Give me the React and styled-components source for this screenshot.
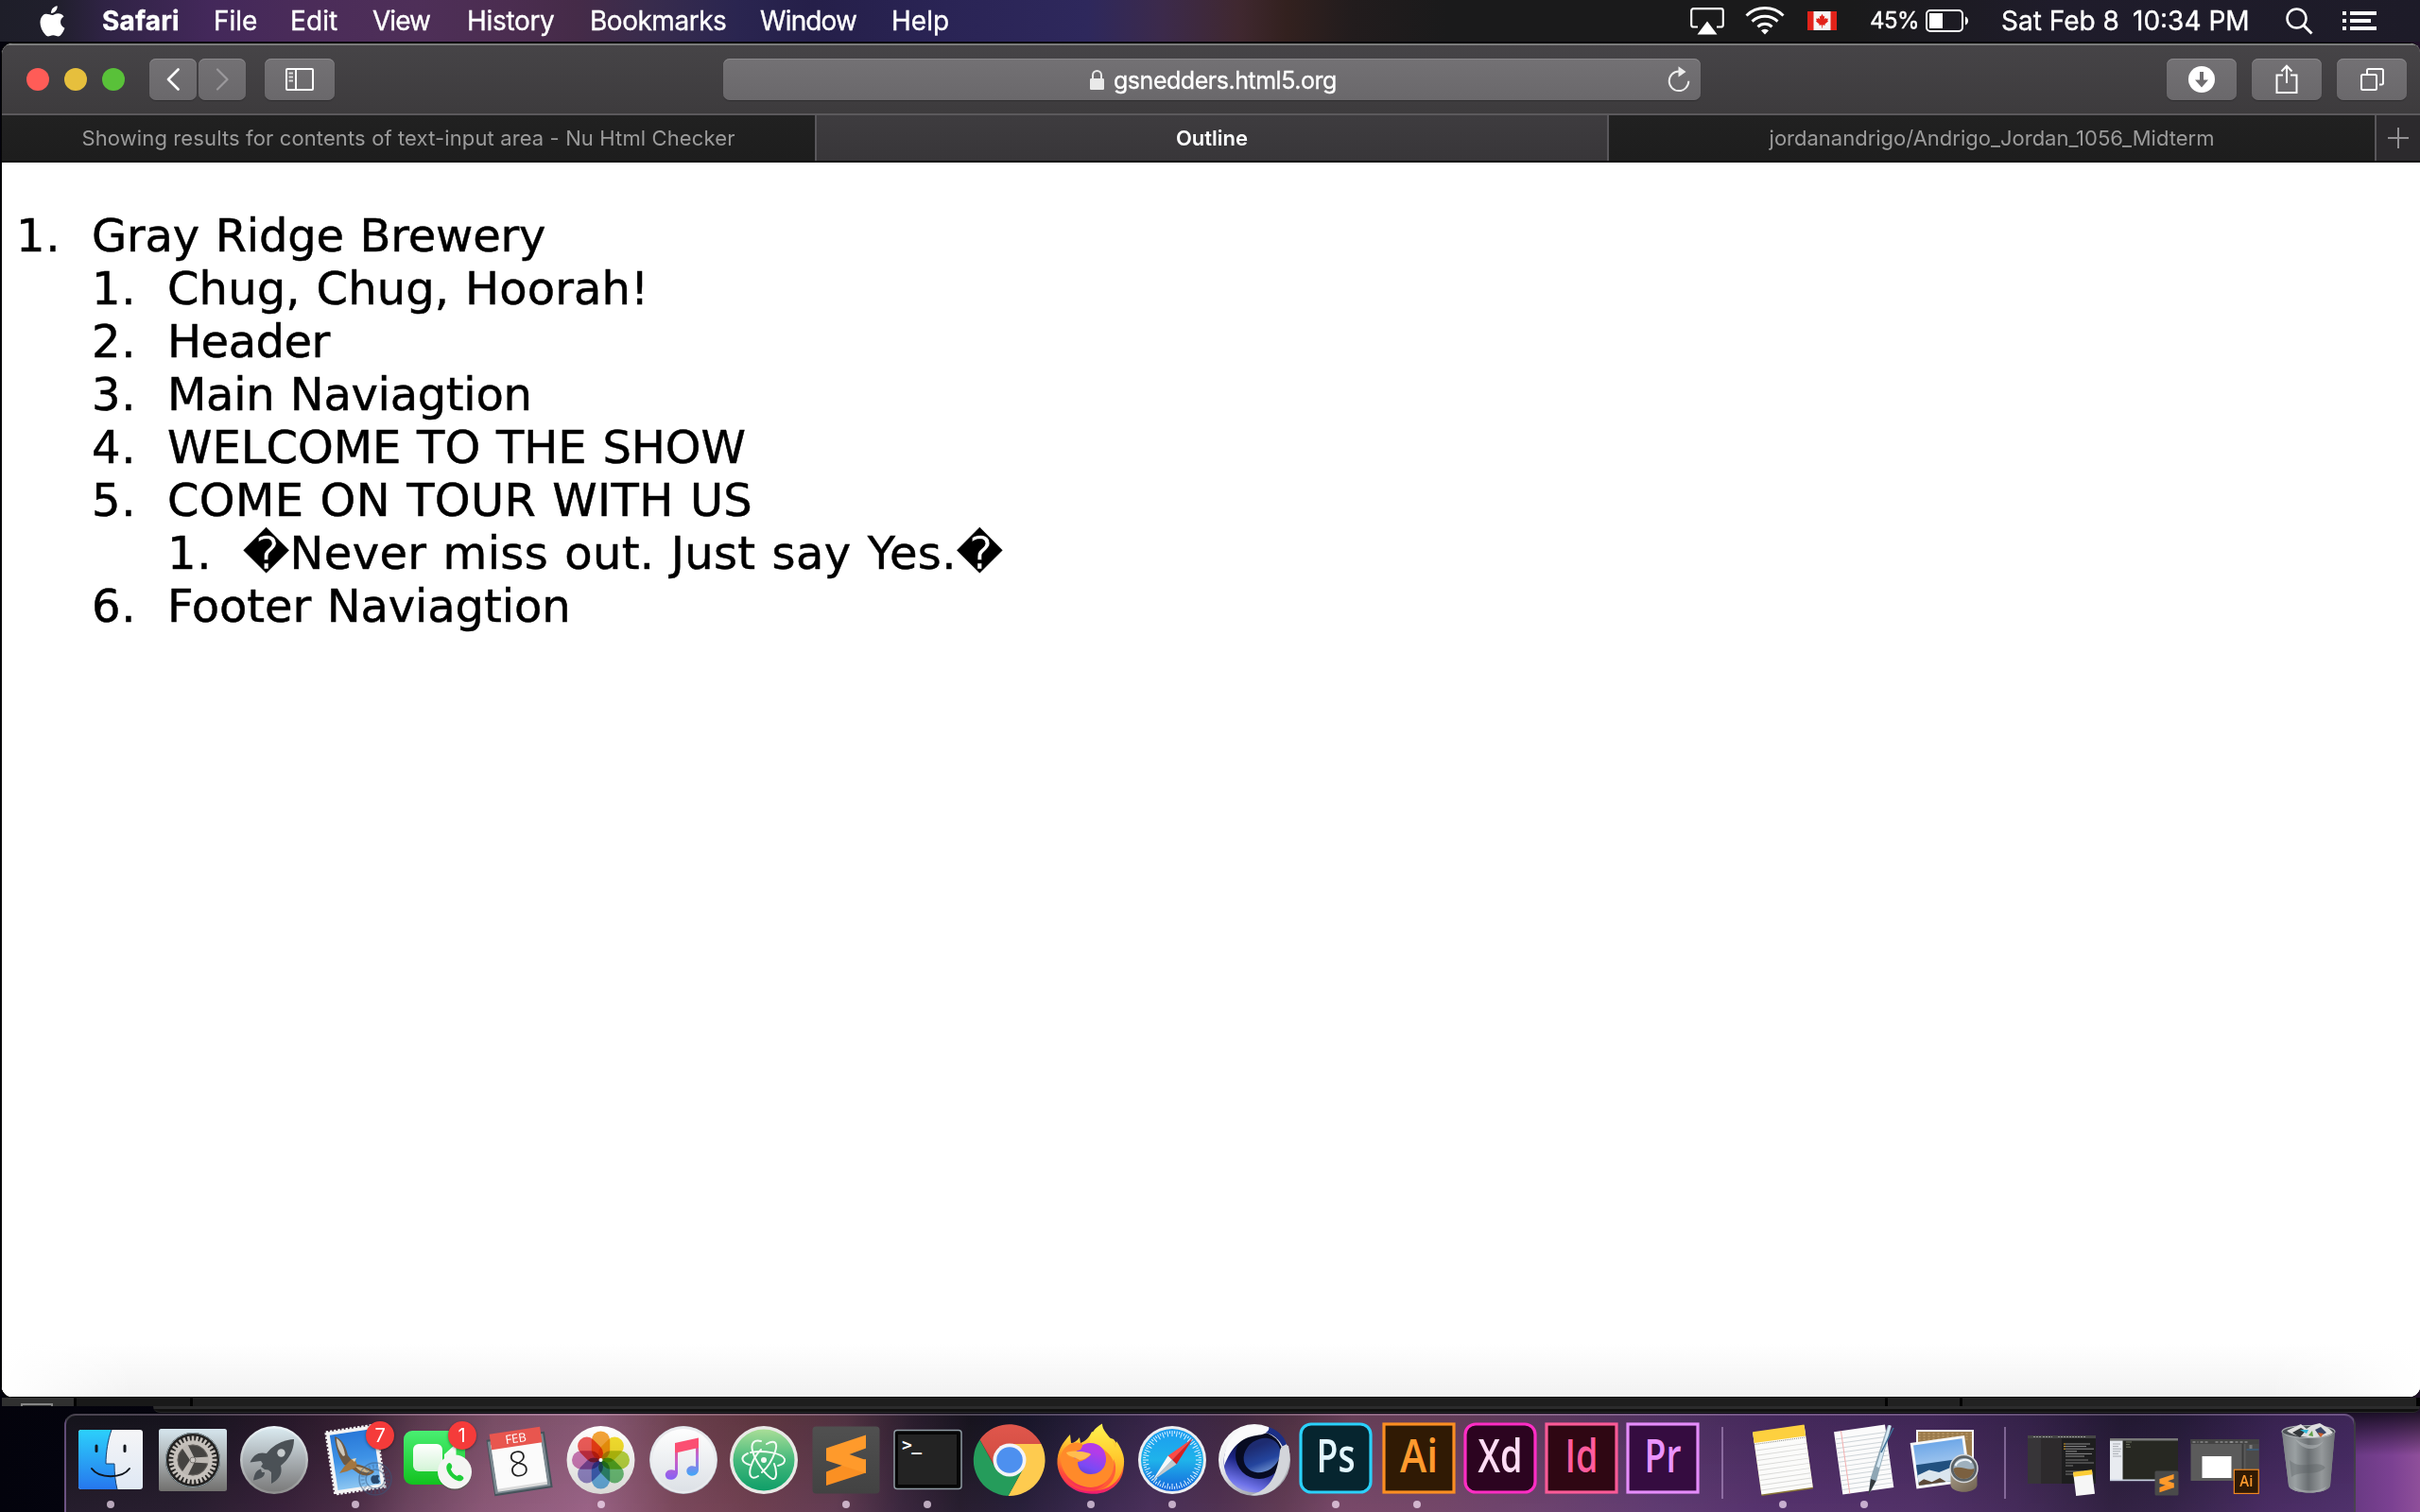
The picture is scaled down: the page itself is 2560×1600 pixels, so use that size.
import React from "react";
import styled, { createGlobalStyle, css } from "styled-components";

const GlobalStyle = createGlobalStyle`
  * { box-sizing: border-box; }
  html, body { margin: 0; padding: 0; background: #04040d; }
  body { width: 2560px; height: 1600px; overflow: hidden; font-family: Inter, "Liberation Sans", sans-serif; }
  svg { display: block; flex: none; }
`;

/* ---------- Desktop ---------- */

const Desktop = styled.div`
  width: 2560px;
  height: 1600px;
  overflow: hidden;
  display: flex;
  flex-direction: column;
  background:
    linear-gradient(180deg, rgba(4, 3, 12, 0.8) 1494px, rgba(4, 3, 12, 0) 1540px),
    linear-gradient(90deg, #03030c 0, #04040f 90px, #0a0813 400px, #08060c 2300px, #6a3a84 2492px, #7b4192 2530px, #8f4f9a 2560px);
`;

/* ---------- Menu bar ---------- */

const MenuBar = styled.header`
  height: 44px;
  flex: none;
  display: flex;
  align-items: center;
  color: #fff;
  font-size: 28px;
  line-height: 44px;
  white-space: pre;
  -webkit-text-stroke: 0.35px #fff;
  background: linear-gradient(
    90deg,
    #1e1e29 0, #201f2c 60px, #2f2344 110px, #43285a 220px, #4b2c59 330px, #4e2f58 440px,
    #4b2d50 540px, #452b48 610px, #382c4d 690px, #2a2550 780px, #251f49 860px, #2a2455 1000px,
    #2e285c 1150px, #3c2a4b 1230px, #402830 1310px, #33211f 1360px, #221c1d 1430px,
    #1a1a1b 1530px, #1a1a1b 1960px, #1f1c2b 2180px, #1d1b28 2560px
  );
`;

const AppleSlot = styled.div`
  width: 108px;
  padding-left: 42px;
`;

const MenuItem = styled.span`
  flex: none;
  width: ${(p) => p.$w}px;
  letter-spacing: ${(p) => p.$ls || 0}px;
  font-weight: ${(p) => (p.$bold ? 700 : 400)};
`;

const StatusArea = styled.div`
  margin-left: auto;
  display: flex;
  align-items: center;
  padding-right: 46px;
`;

const StatusIcon = styled.div`
  margin-left: ${(p) => p.$gap}px;
`;

const BatteryLabel = styled.span`
  margin-left: 35px;
  width: 59px;
  font-size: 24px;
  letter-spacing: -0.5px;
`;

const ClockPart = styled.span`
  width: ${(p) => p.$w}px;
  margin-left: ${(p) => p.$gap || 0}px;
`;

/* ---------- Browser window ---------- */

const BrowserWindow = styled.main`
  margin: 1px 0 0 1px;
  height: 1434px;
  flex: none;
  display: flex;
  flex-direction: column;
  border: 1px solid #050505;
  border-right: 0;
  border-radius: 12px 10px 12px 12px;
  overflow: hidden;
  background: #fff;
`;

const Toolbar = styled.div`
  height: 76px;
  flex: none;
  display: flex;
  align-items: center;
  padding: 0 14px 0 26px;
  border-top: 2px solid #7b7c7c;
  border-bottom: 2px solid #5b595c;
  background: linear-gradient(#464447, #3d3b3d);
`;

const TrafficLights = styled.div`
  display: flex;
  gap: 16px;
  margin-right: 26px;
`;

const Light = styled.span`
  width: 24px;
  height: 24px;
  border-radius: 50%;
  background: ${(p) => p.$color};
`;

const controlFace = css`
  height: 44px;
  border-radius: 7px;
  background: linear-gradient(#737174, #6a686b);
  box-shadow: inset 0 1px 0 #8a888b, 0 1px 1px rgba(0, 0, 0, 0.25);
`;

const ToolButton = styled.button`
  ${controlFace}
  width: ${(p) => p.$w}px;
  margin-left: ${(p) => p.$gap || 0}px;
  padding: 0;
  border: 0;
  flex: none;
  display: flex;
  align-items: center;
  justify-content: center;
`;

const AddressBar = styled.div`
  ${controlFace}
  margin-left: 411px;
  width: 1034px;
  display: flex;
  align-items: center;
  padding: 0 11px 0 388px;
`;

const Address = styled.span`
  margin-left: 10px;
  padding-top: 2px;
  flex: 1;
  color: #fff;
  font-size: 25px;
  letter-spacing: -0.47px;
  -webkit-text-stroke: 0.3px #fff;
`;

const ActionButtons = styled.div`
  margin-left: auto;
  display: flex;
  gap: 16px;
`;

const TabStrip = styled.div`
  height: 50px;
  flex: none;
  display: flex;
  border-bottom: 2px solid #0a0a0a;
  background: #1f1f1f;
`;

const Tab = styled.div`
  width: ${(p) => p.$w}px;
  height: 48px;
  line-height: 48px;
  text-align: center;
  font-size: 22px;
  white-space: nowrap;
  letter-spacing: ${(p) => p.$ls || 0}px;
  border-right: 2px solid #59575b;
  color: ${(p) => (p.$active ? "#fff" : "#9b9b9b")};
  font-weight: ${(p) => (p.$active ? 600 : 400)};
  background: ${(p) => (p.$active ? "linear-gradient(#3e3c3f, #383639)" : "linear-gradient(#212121, #1d1d1d)")};
`;

const NewTab = styled.div`
  flex: 1;
  display: flex;
  align-items: center;
  justify-content: center;
  background: #2c2a2d;
`;

const Page = styled.section`
  flex: 1;
  padding: 49px 0 0 15px;
  color: #000;
  font-family: "DejaVu Sans", sans-serif;
  -webkit-text-stroke: 0.5px #000;
  background:
    linear-gradient(90deg, #fff, rgba(255, 255, 255, 0) 140px, rgba(255, 255, 255, 0) calc(100% - 160px), #fff) 0 100% / 100% 60px no-repeat,
    linear-gradient(#fff, #f2f2f2) 0 100% / 100% 56px no-repeat,
    #fff;
`;

const OutlineList = styled.ol`
  margin: 0;
  padding: 0 0 0 ${(p) => (p.$nested ? 80 : 0)}px;
  list-style: none;
`;

const OutlineRow = styled.div`
  height: 56px;
  display: flex;
  align-items: center;
  font-size: 48px;
  line-height: 56px;
  white-space: nowrap;
`;

const Marker = styled.span`
  width: 80px;
  letter-spacing: 0.6px;
`;

const OutlineText = styled.span`
  letter-spacing: ${(p) => p.$ls}px;
  word-spacing: 1.6px;
`;

/* ---------- Windows peeking out behind ---------- */

const BackWindows = styled.div`
  height: 17px;
  flex: none;
  padding-left: 2px;
  display: flex;
  flex-direction: column;
  align-items: flex-end;
`;

const BackRow = styled.div`
  width: 100%;
  height: 9px;
  display: flex;
  background: #030303;
`;

const BackPane = styled.div`
  height: 9px;
  width: ${(p) => p.$w}px;
  margin-right: 3px;
  padding: 6px 0 0 20px;
  background: ${(p) => p.$c};
`;

const BackThumb = styled.div`
  width: 34px;
  height: 3px;
  border: 2px solid #858585;
  border-bottom: 0;
`;

const BackEdge = styled.div`
  width: 2398px;
  height: 7px;
  border-top: 3px solid #2b2b2c;
  border-bottom: 1px solid #2a2a2b;
  border-radius: 0 0 14px 14px;
  background: #101010;
`;

/* ---------- Dock ---------- */

const DockShelf = styled.nav`
  margin-left: 68px;
  width: 2424px;
  height: 105px;
  flex: none;
  display: flex;
  padding: 4px 0 0 4px;
  border: 2px solid rgba(255, 255, 255, 0.17);
  border-bottom: 0;
  border-radius: 12px 12px 0 0;
  background:
    linear-gradient(180deg, rgba(20, 10, 20, 0.12), rgba(190, 110, 190, 0.1)),
    linear-gradient(
      97deg,
      #14141c 0, #17151f 130px, #2a1a2c 240px, #3c2437 310px, #634055 370px, #85566f 450px,
      #966280 560px, #744552 650px, #673b45 730px, #583747 820px, #2c1f30 890px, #17151f 950px,
      #18172b 1010px, #2b2141 1080px, #3d294f 1150px, #442b46 1220px, #58374a 1290px, #714560 1350px,
      #6c4360 1450px, #643e66 1560px, #56366a 1680px, #4a2c64 1800px, #452a5e 1960px, #38244f 2060px,
      #231a35 2160px, #261c3b 2220px, #3c2558 2320px, #452b64 2424px
    );
`;

const DockItem = styled.div`
  position: relative;
  width: 86.4px;
  flex: none;
  display: flex;
  flex-direction: column;
  align-items: center;
`;

const Running = styled.span`
  width: 8px;
  height: 8px;
  border-radius: 50%;
  background: rgba(255, 235, 255, 0.68);
`;

const DockDivider = styled.div`
  width: 2px;
  height: 76px;
  margin: 8px ${(p) => p.$m}px 0;
  background: rgba(210, 180, 230, 0.45);
`;

const Badge = styled.span`
  position: absolute;
  top: 2px;
  left: 54px;
  width: 30px;
  height: 30px;
  border-radius: 50%;
  background: #f53b3a;
  box-shadow: 0 1px 3px rgba(0, 0, 0, 0.4);
  color: #fff;
  font-size: 20px;
  line-height: 30px;
  text-align: center;
`;

/* ---------- Menu bar icons ---------- */

const AppleLogo = () => (
  <svg width="27" height="33" viewBox="0 0 27 33" fill="#fff">
    <path d="M18.6 0.2c0.3 2-0.6 4-1.7 5.400c-1.200 1.500-3 2.500-4.800 2.400c-0.300-1.900 0.600-3.900 1.700-5.200C15 1.400 17 0.400 18.600 0.200z" />
    <path d="M13.600 9.900c1.300 0 3.200-1.700 5.900-1.700c2.300 0 4.600 1.200 6 3.200c-5.200 3-4.300 10.300 1 12.300c-0.900 2.500-2.300 5-4 7.100c-1.500 1.900-3.100 1.900-5 1.100c-2.200-1-4.300-1-6.500 0c-2 0.800-3.400 0.700-5-1.100C0.100 24.700-1.400 14.900 3.200 10.400C6.800 7 10.200 9.900 13.600 9.900z" />
  </svg>
);

const AirPlay = () => (
  <svg width="36" height="29" viewBox="0 0 36 29">
    <path d="M8 20.500H3.500a2.300 2.300 0 0 1-2.300-2.300V3.400a2.300 2.300 0 0 1 2.300-2.300h29a2.300 2.300 0 0 1 2.300 2.300v14.800a2.300 2.300 0 0 1-2.300 2.300H28" fill="none" stroke="#fff" strokeWidth="2.100" />
    <path d="M18 14.500L28.500 28.500H7.500z" fill="#fff" />
  </svg>
);

const Wifi = () => (
  <svg width="42" height="30" viewBox="0 0 42 30" fill="none" stroke="#fff" strokeWidth="3">
    <path d="M1.500 9.500a28 28 0 0 1 39 0" />
    <path d="M7.500 15.600a19.500 19.500 0 0 1 27 0" />
    <path d="M13.500 21.300a11 11 0 0 1 15 0" />
    <path d="M21 29.500l-4-4.200a5.800 5.800 0 0 1 8 0z" fill="#fff" stroke="none" />
  </svg>
);

const Flag = () => (
  <svg width="31" height="20" viewBox="0 0 31 20">
    <rect width="31" height="20" fill="#f5f5f5" />
    <rect width="6.500" height="20" fill="#e2231a" />
    <rect x="24.500" width="6.500" height="20" fill="#e2231a" />
    <path d="M15.500 2.800l1.500 2.600 1.300-.6-.6 3.600 1.800-1.700.5 1.200 2-.3-.8 2.300.9.700-3.700 3 .4 1.200-2.900-.4v3h-.8v-3l-2.900.4.400-1.200-3.700-3 .9-.7-.8-2.300 2 .3.500-1.200 1.800 1.700-.6-3.600 1.300.6z" fill="#e2231a" />
  </svg>
);

const Battery = () => (
  <svg width="46" height="24" viewBox="0 0 46 24">
    <rect x="1" y="1" width="38" height="22" rx="4" fill="none" stroke="#fff" strokeWidth="2" />
    <rect x="4" y="4" width="14" height="16" fill="#fff" />
    <path d="M42 7.500c4 1.200 4 7.800 0 9z" fill="#fff" />
  </svg>
);

const Search = () => (
  <svg width="29" height="29" viewBox="0 0 29 29" fill="none" stroke="#fff" strokeWidth="2.500">
    <circle cx="11.500" cy="11.500" r="10" />
    <path d="M18.500 18.500l9 9" strokeWidth="3" />
  </svg>
);

const NotificationList = () => (
  <svg width="36" height="20" viewBox="0 0 36 20" fill="#fff">
    <rect width="4" height="4" /><rect x="8" width="28" height="4" />
    <rect y="8" width="4" height="4" /><rect x="8" y="8" width="22" height="4" />
    <rect y="16" width="4" height="4" /><rect x="8" y="16" width="28" height="4" />
  </svg>
);

/* ---------- Toolbar icons ---------- */

const Chevron = ({ forward }) => (
  <svg width="14" height="24" viewBox="0 0 14 24" fill="none" strokeLinecap="round" strokeLinejoin="round"
    stroke={forward ? "#9b999c" : "#fff"} strokeWidth={forward ? 2.2 : 2.6}>
    <path d={forward ? "M2 1.500L12.500 12L2 22.500" : "M12.500 1.500L2 12L12.500 22.500"} />
  </svg>
);

const SidebarIcon = () => (
  <svg width="30" height="24" viewBox="0 0 30 24">
    <rect x="1" y="1" width="28" height="22" rx="1" fill="none" stroke="#fff" strokeWidth="2" />
    <path d="M11 1v22" stroke="#fff" strokeWidth="2" />
    <path d="M3.500 5.500h4.500M3.500 9.500h4.500M3.500 13.500h4.500" stroke="#dcdbdc" strokeWidth="2" />
  </svg>
);

const Lock = () => (
  <svg width="15" height="21" viewBox="0 0 15 21">
    <rect y="9" width="15" height="12" rx="1.200" fill="#e9e9e9" />
    <path d="M3 10V5.500a4.500 4.500 0 0 1 9 0V10" fill="none" stroke="#e9e9e9" strokeWidth="2" />
  </svg>
);

const Reload = () => (
  <svg width="24" height="28" viewBox="0 0 24 28">
    <path d="M12 5.500a10.300 10.300 0 1 0 10.300 10.300" fill="none" stroke="#ededed" strokeWidth="2" />
    <path d="M11.500 0.200L19.500 6L11.500 11.500z" fill="#ededed" />
  </svg>
);

const Download = () => (
  <svg width="28" height="28" viewBox="0 0 28 28">
    <circle cx="14" cy="14" r="14" fill="#fff" />
    <path d="M12 6h4v8.500h5L14 22.500 7 14.500h5z" fill="#6e6c6f" />
  </svg>
);

const Share = () => (
  <svg width="24" height="32" viewBox="0 0 24 32" fill="none" stroke="#fff" strokeWidth="2">
    <path d="M8 11.500H1.500V30h21V11.500H16M12 20V2M6.500 7.500L12 1.800l5.500 5.700" />
  </svg>
);

const TabsIcon = () => (
  <svg width="26" height="26" viewBox="0 0 26 26" fill="none" stroke="#fff" strokeWidth="2">
    <rect x="2" y="8" width="16" height="16" rx="1.500" />
    <path d="M8 8V3.500a1.500 1.500 0 0 1 1.500-1.500H23.500a1.500 1.500 0 0 1 1.500 1.500V17a1.500 1.500 0 0 1-1.500 1.500H21" />
  </svg>
);

const Plus = () => (
  <svg width="22" height="22" viewBox="0 0 22 22" stroke="#939194" strokeWidth="2">
    <path d="M0 11h22M11 0v22" />
  </svg>
);

/* ---------- Dock icons, drawn around a 0,0 centre ---------- */

const Icon = ({ children, dx = 0 }) => (
  <svg width="86" height="86" viewBox="-43 -43 86 86"><g transform={`translate(${dx} 0)`}>{children}</g></svg>
);

const Grad = ({ id, stops, x2 = 0, y2 = 1 }) => (
  <linearGradient id={id} x1="0" y1="0" x2={x2} y2={y2}>
    {stops.map((c, i) => <stop key={i} offset={i / (stops.length - 1)} stopColor={c} />)}
  </linearGradient>
);

const Finder = () => (
  <Icon>
    <Grad id="fA" stops={["#2cd0fb", "#2677ee"]} />
    <Grad id="fB" stops={["#f5f5f7", "#dfe8f4"]} />
    <rect x="-34" y="-32" width="68" height="63" rx="3" fill="url(#fB)" />
    <path d="M-31-32H1C-3-21-5-8-5 4H4C4 14 5 23 7 31H-31a3 3 0 0 1-3-3V-29a3 3 0 0 1 3-3z" fill="url(#fA)" />
    <path d="M1-32C-3-21-5-8-5 4H4C4 14 5 23 7 31" fill="none" stroke="#17406f" strokeWidth="1" />
    <path d="M-15-15v5.500M15-15v5.500" stroke="#10151c" strokeWidth="3" strokeLinecap="round" />
    <path d="M-20 9C-12 20 12 20 20 9" fill="none" stroke="#10151c" strokeWidth="2" strokeLinecap="round" />
  </Icon>
);

const Settings = () => (
  <Icon>
    <Grad id="sA" stops={["#d6e6ee", "#a9aeb0", "#71706e"]} />
    <rect x="-36" y="-33" width="72" height="66" rx="2.500" fill="url(#sA)" />
    <circle r="29" fill="#242322" /><circle r="28.500" fill="none" stroke="#8fa0a8" strokeWidth="1" />
    {Array.from({ length: 32 }, (_, i) => (
      <rect key={i} x="-1.300" y="-25.500" width="2.600" height="6" fill="#c5c0bb" transform={`rotate(${i * 11.25})`} />
    ))}
    <circle r="18.500" fill="#454341" stroke="#c5c0bb" strokeWidth="4.500" />
    <circle r="16" fill="none" stroke="#6b6763" strokeWidth="1" />
    {[0, 120, 240].map((a) => <path key={a} d="M0-2.500L17-3.500V3.500L0 2.500z" fill="#bdb8b3" transform={`rotate(${a})`} />)}
    <circle r="3" fill="#ccc8c4" stroke="#77736f" />
  </Icon>
);

const Launchpad = () => (
  <Icon>
    <Grad id="lA" stops={["#d9e9ef", "#a9afb3", "#7b7b7b"]} />
    <Grad id="lB" stops={["#eef7fb", "#8e8e8e"]} />
    <circle r="36" fill="url(#lB)" /><circle r="33.500" fill="url(#lA)" />
    <path d="M21-22C10-21.500-1-16-8-7C-16-9-22-6-25.500 2.500L-14 1L-12 4L-14 7L-10 10L-6 10.500L-3 13L-3 25C6 20 9 14 7 6C16-1 21-11 21-22z" fill="#4b5156" />
    <path d="M-14 9.500C-20 11-21 16-22 21.500C-15 20-10 18.500-10 13L-13 13z" fill="#4b5156" />
    <circle cx="7.500" cy="-7.500" r="4.200" fill="#c7ccce" />
  </Icon>
);

const Mail = () => (
  <Icon>
    <Grad id="mA" stops={["#2878d8", "#3f93e6", "#8cc6f2"]} />
    <g transform="rotate(-8.500)">
      <rect x="-26.500" y="-33.500" width="53" height="66" fill="#f4f4f4" stroke="#f4f4f4" strokeWidth="3" strokeDasharray="2.500 1.700" />
      <rect x="-23" y="-30" width="46" height="59" fill="url(#mA)" />
    </g>
    <path d="M-22-25C-15-23-10-15-8-5L-4 0C-5 5-9 7-12 5C-17-2-21-12-22-25z" fill="#6d5a45" />
    <path d="M-20-23C-15-20-12-13-11-5L-13-4C-17-9-20-15-20-23z" fill="#cfc8ba" />
    <path d="M-2 4C4 4 13 8 20 12C17 17 9 18 3 14L-4 9z" fill="#7a5a38" />
    <path d="M0 7C6 7 12 9 17 13C11 14 5 13 0 7z" fill="#cdb48a" />
    <path d="M-4-1C1 0 3 4 0 8L-9 12L-17 14L-12 7z" fill="#a4763f" />
    <path d="M-4-1l5-1-2 4z" fill="#e8d9b8" />
    <g fill="none" stroke="#36587e" strokeOpacity=".5">
      <circle cx="21" cy="20" r="17" strokeWidth="1.500" /><circle cx="21" cy="20" r="10" strokeWidth="1.500" />
      <circle cx="21" cy="20" r="13.500" strokeWidth="4" strokeDasharray="2 2" strokeOpacity=".35" />
    </g>
    <path d="M21 16.500c2-1.500 4-.6 4.500.8c-2 1.500-1.500 4 .5 5c-1 2.800-2.500 3.200-4.500 2.400c-2 .8-4 .4-5-3c-.8-4 1.500-6.500 4.500-5.200z" fill="#28496e" />
  </Icon>
);

const FaceTime = () => (
  <Icon>
    <Grad id="ftA" stops={["#49ef72", "#12c21f"]} /><Grad id="ftB" stops={["#ffffff", "#d3f4d6"]} />
    <rect x="-36" y="-31" width="65" height="57" rx="9" fill="url(#ftA)" />
    <rect x="-26" y="-17" width="31" height="29" rx="6" fill="url(#ftB)" />
    <path d="M7-6L17-15c1.500-1 2.500-.5 2.500 1V10L7 1z" fill="url(#ftB)" />
    <circle cx="18" cy="14" r="18" fill="#0a6a1e" opacity=".25" />
    <circle cx="18" cy="12.500" r="18" fill="#f4f5f3" />
    <path d="M9.500 6C11 2.500 13 2 14.500 4.500C16 7 15 8.500 13.800 9.800C15.500 13.500 17.500 15.500 20.500 17C22 15.500 23.500 15 26 17C28.500 19 27.500 20.500 25 22C19 24 7.500 13.500 9.500 6z" fill="#1fce39" />
  </Icon>
);

const Calendar = () => (
  <Icon>
    <g transform="rotate(-8.500)">
      <path d="M-31-26H31V34H-31z" fill="#46535b" />
      <path d="M-30-24H29V32H-30z" fill="#7d8a92" />
      <path d="M-27-20H26V30H-27z" fill="#dcdcdc" /><path d="M-27-20H26V27H-27z" fill="#fbfbfb" />
      <path d="M-27-31.500H27V-15H-27z" fill="#e8564f" />
      <text x="0" y="-18.500" textAnchor="middle" fontFamily="Open Sans" fontSize="13" fill="#fff">FEB</text>
      <text x="-1" y="17" textAnchor="middle" fontFamily="Open Sans" fontWeight="300" fontSize="37" fill="#222">8</text>
    </g>
  </Icon>
);

const petals = ["#f6a02d", "#f4dd22", "#b5d336", "#66bf73", "#62aee6", "#8f83c8", "#cb74b4", "#ef5350"];
const Petal = styled.rect`
  mix-blend-mode: multiply;
`;
const Photos = () => (
  <Icon dx={-0.5}>
    <Grad id="phA" stops={["#ffffff", "#d9d9d6"]} />
    <circle r="36" fill="url(#phA)" />
    {petals.map((c, i) => (
      <Petal key={c} x="-9.700" y="-30.500" width="19.400" height="30" rx="9.700" fill={c} fillOpacity=".95"
        transform={`rotate(${i * 45})`} />
    ))}
    <circle r="2" fill="#fff" />
  </Icon>
);

const Music = () => (
  <Icon dx={1}>
    <Grad id="muA" stops={["#fefefe", "#dde1e6"]} />
    <Grad id="muB" stops={["#fb4e6e", "#c860c8", "#8561f5"]} />
    <Grad id="muC" stops={["#fb4e6e", "#b56add", "#3ea8f8"]} />
    <circle r="36" fill="#b5bcc6" /><circle r="35.500" cy="-.3" fill="#e9ebee" /><circle r="33" fill="url(#muA)" />
    <path d="M-9-17.500V11C-16 8.500-20 13-19 17C-17.500 23-7 22-6 14V-8L-6-18z" fill="url(#muB)" />
    <path d="M13-22V7C6 4.500 2.500 9 3.500 13C5 19 16 17.500 16 10V-23z" fill="url(#muC)" />
    <path d="M-9-18L16-23.500V-13L-6-8H-9z" fill="#fb4f72" />
  </Icon>
);

const Atom = () => (
  <Icon>
    <Grad id="atA" stops={["#a9de97", "#45b97c", "#0f9e68"]} />
    <circle r="36" fill="#e9e9e6" /><circle r="32.500" fill="url(#atA)" />
    <g fill="none" stroke="#f2fbf3" strokeWidth="2" strokeLinecap="round">
      <path d="M-17-7C-26-3-23 3-15 5M-14-8C0-11 20-7 22-1C23 3 19 5 15 6" />
      <path d="M-3-20C-10-22-14-18-12-10C-9 2 2 16 9 20C14 21 14 12 11 4" />
      <path d="M3-17C12-22 15-18 12-9C9 0 4 8-2 13M-6 17C-14 22-16 15-14 8C-12 1-8-6-3-11" />
    </g>
    <circle r="3" fill="#f2fbf3" />
  </Icon>
);

const SublimeMark = () => (
  <>
    <path d="M-21 12.500V27L21 13.500V-1L0 4z" fill="#fa9023" />
    <path d="M21-26.500L-21-12.500V.5L21 14V0L3.500-6L21-12.500z" fill="#ff9a2b" />
  </>
);

const Sublime = () => (
  <Icon>
    <Grad id="suA" stops={["#505050", "#424242"]} />
    <rect x="-35.500" y="-35.500" width="71" height="71" rx="4" fill="url(#suA)" />
    <SublimeMark />
  </Icon>
);

const Terminal = () => (
  <Icon>
    <rect x="-35" y="-31.500" width="71" height="62" rx="3" fill="#060606" stroke="#8f9ba3" strokeWidth="1.500" />
    <rect x="-31" y="-27" width="62" height="53" fill="#232323" />
    <text x="-27" y="-10" fontFamily="DejaVu Sans Mono" fontWeight="700" fontSize="18" textLength="21" fill="#fff">&gt;_</text>
  </Icon>
);

const Chrome = () => (
  <Icon dx={1}>
    <Grad id="chR" stops={["#e0574c", "#cf4a40"]} />
    <path d="M-31.500-21.500A38 38 0 0 1 33.500-17H0L-15 8.500z" fill="url(#chR)" />
    <path d="M33.500-17A38 38 0 0 1-1.500 38L14.700 8.500L0-17z" fill="#fecb4f" />
    <path d="M-1.500 38A38 38 0 0 1-31.500-21.500L-15 8.500L14.700 8.500z" fill="#259c5b" />
    <path d="M-31.500-21.500L-15 8.500L-17 2z" fill="#8c2d27" opacity=".35" />
    <circle r="17.500" fill="#f4f4f6" /><circle r="13.800" fill="#4d90ef" />
  </Icon>
);

const Firefox = () => (
  <Icon>
    <Grad id="ffA" stops={["#ffe645", "#ff9f22", "#ff4a3c", "#ea0f7f"]} x2={-0.1} />
    <Grad id="ffB" stops={["#fff44f", "#ffcb2f", "#ff8a1c"]} />
    <Grad id="ffC" stops={["#b43be8", "#7a4af5", "#4b38b8"]} x2={-0.4} />
    <path d="M-22-27L-21-18C-18-18-15-20-12-24L-11-18C-3-21 0-28 1-30L24-22C36-8 38 10 30 22C22 34 8 37-2 35.500C-22 34-34 20-35.500 4C-36-10-30-18-22-27z" fill="url(#ffA)" />
    <path d="M-1-18C-1-28 4-34 12-38.500C12-32 17-28 22-21L26-13C27-16 27-18 27-20C34-10 37 0 34 8C30 24 18 32 4 32C20 26 24 10 20-2C18-12 8-16-1-18z" fill="url(#ffB)" />
    <circle cx="-.5" cy="-1" r="17" fill="url(#ffC)" />
    <path d="M-26-8C-20-10-14-9-11-11C-8-15-8-18-12-18C-20-20-30-14-32-4C-33 12-20 28 0 29C14 29 26 18 24 2C22-4 18-8 14-10C20 4 12 15 0 15C-9 15-14 9-14 2C-8 1-3-2 0-6C-5-8-10-6-15-2C-21-1-25-3-26-8z" fill="#ff8a2a" />
    <path d="M-33 6C-28 26-8 33 6 28C18 25 26 14 24-1C30 12 24 31 2 33C-18 34-32 22-33 6z" fill="#ff473f" opacity=".75" />
    <path d="M-26-8C-20-10-14-9-10-9C-6-8-2-8 0-6C-3-3-8 0-12 0C-15-3-24-3-26-8z" fill="#ffbd4f" />
  </Icon>
);

const SafariIcon = () => (
  <Icon>
    <Grad id="saA" stops={["#1b9cf0", "#1fb3ea", "#1566dc"]} />
    <circle r="36" fill="#eceef0" /><circle r="33" fill="url(#saA)" />
    {Array.from({ length: 72 }, (_, i) => (
      <path key={i} d={`M0-31V${i % 2 ? -28 : -25}`} stroke="#dff1ff" strokeWidth="1" transform={`rotate(${i * 5})`} />
    ))}
    <path d="M22-23L-4.500-4.500L0 0z" fill="#ff4a45" /><path d="M22-23L4.500 4.500L0 0z" fill="#d8201f" />
    <path d="M-21 22L-4.500-4.500L0 0z" fill="#f7f7f7" /><path d="M-21 22L4.500 4.500L0 0z" fill="#c4c8cc" />
  </Icon>
);

const Cinema4D = () => (
  <Icon>
    <Grad id="ciA" stops={["#ffffff", "#e9eaee", "#a3a6ad"]} x2={0.5} />
    <Grad id="ciB" stops={["#0a0e2c", "#1a2382", "#6e72e8", "#dcdcf2"]} x2={-0.35} />
    <Grad id="ciC" stops={["#1d2b70", "#24459e", "#8fb2e4"]} x2={-0.3} />
    <circle r="38" fill="url(#ciA)" />
    <circle cx="0" cy="2" r="32.500" fill="url(#ciB)" />
    <circle cx="5" cy="-5" r="25" fill="#070b22" />
    <ellipse cx="8" cy="-5" rx="20.500" ry="17" fill="url(#ciC)" transform="rotate(-35 8 -5)" />
    <path d="M-32 6C-34-16-20-34-2-36L15-35C16-28 9-27 2-26C-14-24-24-14-32 6z" fill="#fafafc" />
    <path d="M15-35C24-32 31-26 34-17L30-14C26-22 20-27 12-29C15-31 16-33 15-35z" fill="#1c2f86" />
    <path d="M36-15C40 2 34 20 21 31C14 36 4 38-4 37C14 32 24 20 27-10C28-15 32-17 36-15z" fill="#d3d5da" />
  </Icon>
);

const adobe = {
  Ps: { line: "#2ad1fb", fill: "#06252f", text: "#e3f7ff", round: true, w: 41 },
  Ai: { line: "#fb8e22", fill: "#301a04", text: "#ff9a2e", w: 40, dx: 2 },
  Xd: { line: "#ff2dc4", fill: "#2c0420", text: "#ffdcf5", round: true, w: 47, dx: 1 },
  Id: { line: "#fb5a97", fill: "#2f0713", text: "#ff5c9d", w: 35, dx: 1 },
  Pr: { line: "#e58cfb", fill: "#350c40", text: "#ea94ff", w: 39 },
};

const AdobeTile = ({ name }) => {
  const { line, fill, text, round, w } = adobe[name];
  return (
    <>
      <rect x="-37" y="-38" width="74" height="72" rx={round ? 11 : 0} fill={fill} stroke={line} strokeWidth="3.200" />
      <text x={-w / 2} y="13" fontFamily="Open Sans" fontWeight="600" fontSize="48" textLength={w} lengthAdjust="spacingAndGlyphs" fill={text}>{name}</text>
    </>
  );
};

const Adobe = ({ name }) => <Icon dx={adobe[name].dx}><AdobeTile name={name} /></Icon>;

const Notes = () => (
  <Icon>
    <g transform="rotate(-8)">
      <rect x="-27.500" y="-33" width="55" height="67.500" fill="#8a7636" />
      <rect x="-27.500" y="-33" width="55" height="66" fill="#fbfbfa" />
      <rect x="-27.500" y="-34" width="55" height="12" fill="#fdd03f" />
      <path d="M-27-20.500H27" stroke="#8b8b80" strokeDasharray="1 1" />
      {Array.from({ length: 9 }, (_, i) => <path key={i} d={`M-27 ${-14 + i * 5.3}H27`} stroke="#d9d9d7" />)}
    </g>
  </Icon>
);

const TextEdit = () => (
  <Icon>
    <g transform="rotate(-8)">
      <rect x="-27.500" y="-34" width="54.500" height="67" fill="#fbfbfb" />
      {Array.from({ length: 12 }, (_, i) => <path key={i} d={`M-27 ${-26 + i * 4.9}H27`} stroke="#ced4d8" />)}
      <path d="M-20-34V33" stroke="#f3b0b0" />
    </g>
    <path d="M25-37L29-36L13 22L5 36L6.500 20z" fill="#8fa6b4" />
    <path d="M26-37L28.500-36.500L16 8L13 7z" fill="#d7e9f4" />
    <path d="M7 20L12.500 22L4.500 37z" fill="#34393d" />
    <path d="M31-34L18-8" stroke="#3c6f96" strokeWidth="1.500" />
  </Icon>
);

const Preview = () => (
  <Icon dx={-1.5}>
    <Grad id="prA" stops={["#6fa8e8", "#c5dcf2"]} />
    <Grad id="prB" stops={["#a79c88", "#6f614f"]} x2={1} />
    <rect x="-29.500" y="-31" width="59" height="38" fill="#9b7b4c" stroke="#f4f4f4" strokeWidth="2" />
    <path d="M-28-28H28M-28-25H28M-28-22H28" stroke="#c9a873" strokeDasharray="2 3" />
    <g transform="rotate(-8)">
      <rect x="-34" y="-23" width="58" height="49" fill="#f8f8f8" />
      <rect x="-31" y="-20" width="52" height="43" fill="url(#prA)" />
      <rect x="-31" y="1" width="52" height="22" fill="#21507f" />
      <path d="M-31 12L-18 8L-8 12L4 9L21 14V23H-31z" fill="#dbe6ee" />
      <path d="M-31 20l6-3 8 4 9-3 6 5H-31zM6 5l6-3 9 4v5z" fill="#5c4a38" />
    </g>
    <path d="M6 10V27C8 36 32 36 34 27V10z" fill="url(#prB)" />
    <circle cx="20" cy="9" r="14.500" fill="#5b6266" stroke="#d5d8da" strokeWidth="1.500" />
    <circle cx="20" cy="9" r="11" fill="#9fb0bd" /><path d="M9 9C15 5 26 12 31 9A11 11 0 0 1 9 9z" fill="#7b6040" />
    <path d="M11 6C14-1 25-2 28 3" stroke="#eff4f8" strokeWidth="2" fill="none" />
  </Icon>
);

const lines = (n, x, y, step, lens, c) =>
  Array.from({ length: n }, (_, i) => <path key={`${x}${i}`} d={`M${x} ${y + i * step}h${lens[i % lens.length]}`} stroke={c} strokeWidth="1" />);

const MinNotes = () => (
  <Icon dx={-1}>
    <rect x="-38" y="-26" width="72" height="51" fill="#2d2a2c" />
    <rect x="-38" y="-26" width="72" height="3" fill="#464646" />
    <path d="M-32-24.500h8M-22-24.500h10M-6-24.500h30" stroke="#999" strokeDasharray="2 1" />
    <rect x="-38" y="-23" width="14" height="48" fill="#373538" />
    <rect x="-2" y="-23" width="36" height="48" fill="#1e1e1f" />
    {lines(6, 2, -17, 2.6, [26, 22, 30, 12, 28, 20], "#8e8e8e")}
    {lines(3, 0, -17, 2.6, [2], "#d7a32c")}
    {lines(3, 2, 0, 3, [24, 30, 8], "#777")}
    {lines(2, 2, 12, 3, [18, 12], "#777")}
    <g transform="translate(21.500 24) rotate(-7)">
      <rect x="-10" y="-12" width="20" height="25" fill="#f6f6f6" /><rect x="-10" y="-12.500" width="20" height="5" fill="#fdcc35" />
    </g>
  </Icon>
);

const MinSublime = () => (
  <Icon dx={-1}>
    <rect x="-38" y="-23" width="72" height="45" fill="#272822" />
    <rect x="-38" y="-23" width="72" height="2.500" fill="#777" />
    <rect x="-38" y="-20.500" width="13.500" height="42" fill="#e8ebf0" />
    {lines(6, -35, -17, 2.600, [8, 6, 9], "#a9adb3")}
    {lines(3, -21, -19, 2.600, [6, 4, 5], "#6f7361")}
    <rect x="-38" y="20.500" width="72" height="1.700" fill="#c7cfe0" />
    <g transform="translate(22 24.500)"><rect x="-12.500" y="-13" width="25" height="26" rx="1.500" fill="#4a4a4a" /><g transform="scale(.36)"><SublimeMark /></g></g>
  </Icon>
);

const MinIllustrator = () => (
  <Icon dx={0.5}>
    <rect x="-40" y="-22" width="72" height="44" fill="#5b5b5b" />
    <rect x="-40" y="-22" width="72" height="5" fill="#444" />
    <path d="M-38-19h6M-30-19h10M-14-19h20M2-19h18" stroke="#aaa" strokeDasharray="3 2" />
    <rect x="14" y="-17" width="2" height="39" fill="#3c3c3c" /><rect x="18" y="-17" width="14" height="39" fill="#4b4b4b" />
    <path d="M19-11h13" stroke="#356a98" /><path d="M22-15h3M22-13h3" stroke="#aaa" />
    <rect x="-28" y="-4" width="31" height="23" fill="#fff" />
    <g transform="translate(18.800 23.500) scale(.35)"><AdobeTile name="Ai" /></g>
  </Icon>
);

const Trash = () => (
  <Icon dx={1}>
    <Grad id="trA" stops={["#7c8184", "#9aa0a2", "#6a6f72", "#95999b", "#6f7376"]} x2={1} y2={0} />
    <path d="M-30-30C-20-22 20-22 26-30L21 27C19 37-21 37-23 27z" fill="url(#trA)" />
    <ellipse cx="-2" cy="-30" rx="28" ry="6.500" fill="#4d5256" stroke="#a8adb0" strokeWidth="1.200" />
    <path d="M-25-31L-10-38L-4-33L2-37L10-39L20-33L24-29C14-22-14-22-25-31z" fill="#dedede" />
    <path d="M-19-29l9-5 5 3-6 7z" fill="#34383b" /><path d="M-11-32h9l-2 4z" fill="#33b8d8" />
    <path d="M5-32l6-3 6 6-7 4z" fill="#3b4566" /><path d="M8-29l6 1-3 4z" fill="#d0602c" /><path d="M-2-26l4-5 1 6z" fill="#5f9f48" />
    <path d="M-30-30L-23 27C-21 37 19 37 21 27L26-30L22-26C12-21-16-21-26-26z" fill="url(#trA)" />
    <path d="M-16-22C-4-14 8-14 14-20C6-8-8-10-16-22zM-18 28C-8 34 8 34 17 28C14 37-14 37-18 28z" fill="#bfc4c6" opacity=".45" />
    <path d="M-22 0C-10 12 8-2 16 8C6 18-10 10-20 18z" fill="#565b5e" opacity=".35" />
  </Icon>
);

/* ---------- Data ---------- */

const menus = [
  { label: "Safari", w: 118, ls: 0.19, bold: true },
  { label: "File", w: 81 },
  { label: "Edit", w: 87, ls: 0.08 },
  { label: "View", w: 100, ls: -0.95 },
  { label: "History", w: 130, ls: -0.33 },
  { label: "Bookmarks", w: 180, ls: -0.48 },
  { label: "Window", w: 139, ls: -0.86 },
  { label: "Help", w: 70 },
];

const outline = [
  {
    text: "Gray Ridge Brewery", ls: -0.19,
    children: [
      { text: "Chug, Chug, Hoorah!", ls: 0.1 },
      { text: "Header", ls: -0.5 },
      { text: "Main Naviagtion", ls: -0.32 },
      { text: "WELCOME TO THE SHOW", ls: -0.04 },
      { text: "COME ON TOUR WITH US", ls: 0.34 },
      { text: "Footer Naviagtion", ls: -0.12 },
    ],
  },
];
outline[0].children[4].children = [{ text: "\uFFFDNever miss out. Just say Yes.\uFFFD", ls: 0.34 }];

const apps = [
  { icon: <Finder />, running: true },
  { icon: <Settings /> },
  { icon: <Launchpad /> },
  { icon: <Mail />, running: true, badge: "7" },
  { icon: <FaceTime />, badge: "1" },
  { icon: <Calendar /> },
  { icon: <Photos />, running: true },
  { icon: <Music /> },
  { icon: <Atom /> },
  { icon: <Sublime />, running: true },
  { icon: <Terminal />, running: true },
  { icon: <Chrome /> },
  { icon: <Firefox />, running: true },
  { icon: <SafariIcon />, running: true },
  { icon: <Cinema4D /> },
  { icon: <Adobe name="Ps" />, running: true },
  { icon: <Adobe name="Ai" />, running: true },
  { icon: <Adobe name="Xd" /> },
  { icon: <Adobe name="Id" /> },
  { icon: <Adobe name="Pr" /> },
];
const recents = [{ icon: <Notes />, running: true }, { icon: <TextEdit />, running: true }, { icon: <Preview /> }];
const minimized = [{ icon: <MinNotes /> }, { icon: <MinSublime /> }, { icon: <MinIllustrator /> }, { icon: <Trash /> }];

const DockGroup = ({ items }) =>
  items.map((item, i) => (
    <DockItem key={i}>
      {item.icon}
      {item.badge && <Badge>{item.badge}</Badge>}
      {item.running && <Running />}
    </DockItem>
  ));

const Outline = ({ items, nested }) => (
  <OutlineList $nested={nested}>
    {items.map((item, i) => (
      <li key={item.text}>
        <OutlineRow>
          <Marker>{i + 1}.</Marker>
          <OutlineText $ls={item.ls}>{item.text}</OutlineText>
        </OutlineRow>
        {item.children && <Outline items={item.children} nested />}
      </li>
    ))}
  </OutlineList>
);

export default function App() {
  return (
    <>
      <GlobalStyle />
      <Desktop>
        <MenuBar>
          <AppleSlot><AppleLogo /></AppleSlot>
          {menus.map((m) => <MenuItem key={m.label} $w={m.w} $ls={m.ls} $bold={m.bold}>{m.label}</MenuItem>)}
          <StatusArea>
            <StatusIcon $gap={0}><AirPlay /></StatusIcon>
            <StatusIcon $gap={22}><Wifi /></StatusIcon>
            <StatusIcon $gap={24}><Flag /></StatusIcon>
            <BatteryLabel>45%</BatteryLabel>
            <StatusIcon $gap={0}><Battery /></StatusIcon>
            <ClockPart $w={139} $gap={34}>Sat Feb 8</ClockPart>
            <ClockPart $w={124}>10:34 PM</ClockPart>
            <StatusIcon $gap={38}><Search /></StatusIcon>
            <StatusIcon $gap={31}><NotificationList /></StatusIcon>
          </StatusArea>
        </MenuBar>

        <BrowserWindow>
          <Toolbar>
            <TrafficLights>
              <Light $color="#ff5c57" /><Light $color="#e6bf3d" /><Light $color="#59c139" />
            </TrafficLights>
            <ToolButton $w={50}><Chevron /></ToolButton>
            <ToolButton $w={50} $gap={2}><Chevron forward /></ToolButton>
            <ToolButton $w={74} $gap={20}><SidebarIcon /></ToolButton>
            <AddressBar>
              <Lock />
              <Address>gsnedders.html5.org</Address>
              <Reload />
            </AddressBar>
            <ActionButtons>
              <ToolButton $w={74}><Download /></ToolButton>
              <ToolButton $w={74}><Share /></ToolButton>
              <ToolButton $w={74}><TabsIcon /></ToolButton>
            </ActionButtons>
          </Toolbar>
          <TabStrip>
            <Tab $w={862} $ls={0.12}>Showing results for contents of text-input area - Nu Html Checker</Tab>
            <Tab $w={838} $active>Outline</Tab>
            <Tab $w={812}>jordanandrigo/Andrigo_Jordan_1056_Midterm</Tab>
            <NewTab><Plus /></NewTab>
          </TabStrip>
          <Page><Outline items={outline} /></Page>
        </BrowserWindow>

        <BackWindows>
          <BackRow>
            <BackPane $w={76} $c="#303030"><BackThumb /></BackPane>
            <BackPane $w={120} $c="#191919" />
            <BackPane $w={1790} $c="#1e1e1e" />
            <BackPane $w={76} $c="#212121" />
            <BackPane $w={480} $c="#222222" />
          </BackRow>
          <BackEdge />
        </BackWindows>

        <DockShelf>
          <DockGroup items={apps} />
          <DockDivider $m={19.5} />
          <DockGroup items={recents} />
          <DockDivider $m={18.5} />
          <DockGroup items={minimized} />
        </DockShelf>
      </Desktop>
    </>
  );
}
